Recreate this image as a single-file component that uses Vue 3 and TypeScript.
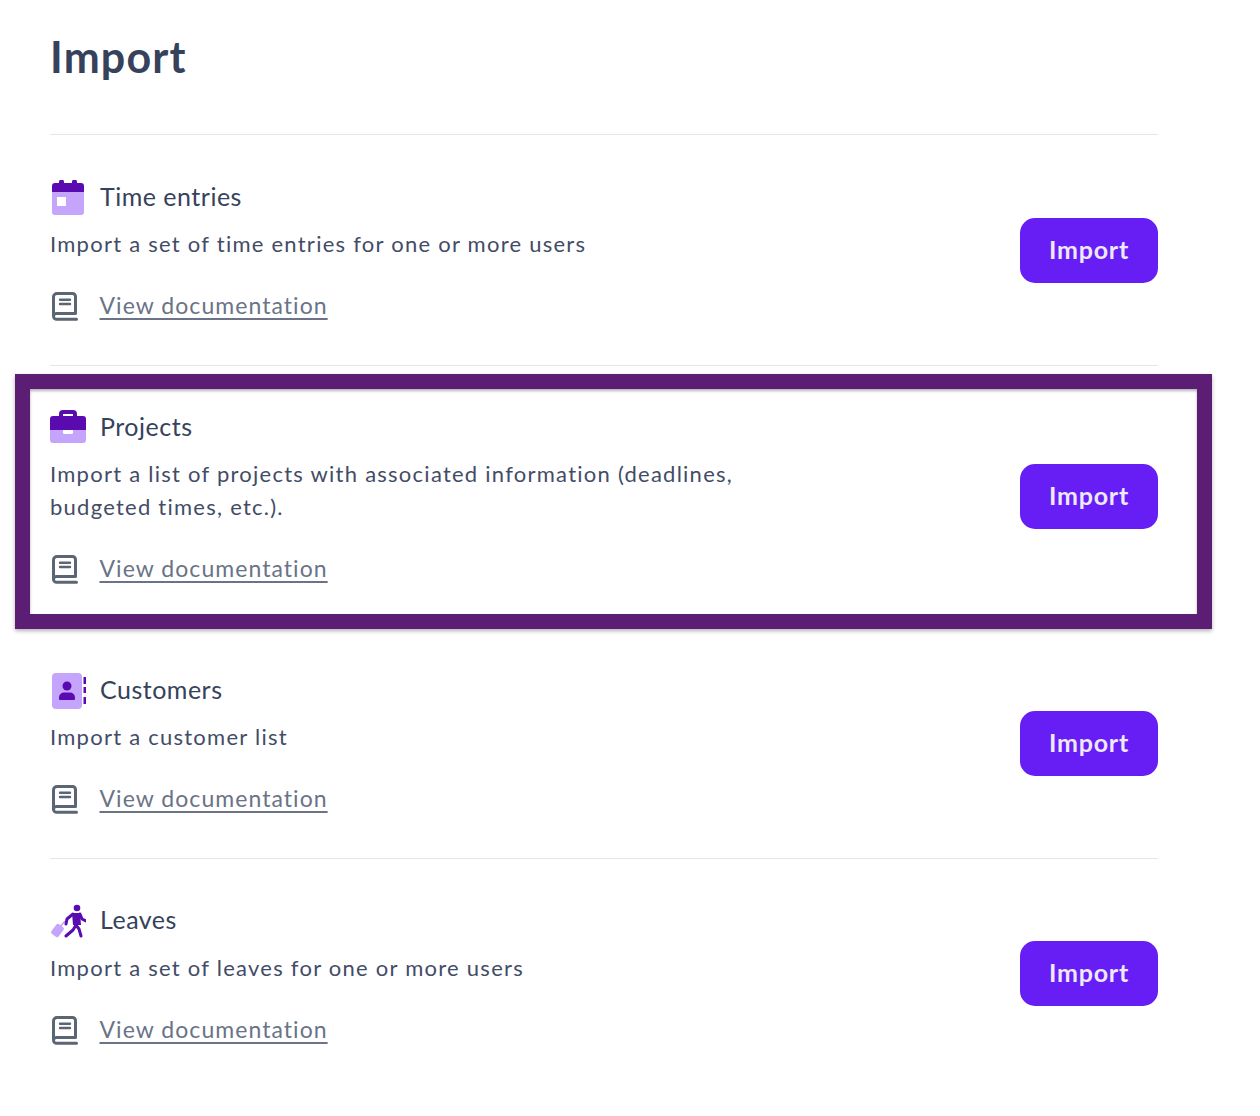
<script setup lang="ts">
interface ImportRow {
  id: string
  title: string
  desc: string
  highlighted?: boolean
}

const rows: ImportRow[] = [
  { id: 'time', title: 'Time entries', desc: 'Import a set of time entries for one or more users' },
  {
    id: 'projects',
    title: 'Projects',
    desc: 'Import a list of projects with associated information (deadlines, budgeted times, etc.).',
    highlighted: true,
  },
  { id: 'customers', title: 'Customers', desc: 'Import a customer list' },
  { id: 'leaves', title: 'Leaves', desc: 'Import a set of leaves for one or more users' },
]
</script>

<template>
  <div class="page">
    <h1 class="page-title">Import</h1>

    <section v-for="row in rows" :key="row.id" class="row">
      <div v-if="row.highlighted" class="highlight" />

      <div class="info">
        <div class="head">
          <svg class="kind-icon" viewBox="0 0 36 36" width="36" height="36">
            <template v-if="row.id === 'time'">
              <path fill="#c4a5fb" d="M2 12h32v20a3 3 0 0 1-3 3H5a3 3 0 0 1-3-3z" />
              <path fill="#5a0bb0" d="M2 12V6a3 3 0 0 1 3-3h4V2a2.500 2.500 0 0 1 5 0v1h8V2a2.500 2.500 0 0 1 5 0v1h4a3 3 0 0 1 3 3v6z" />
              <rect x="7" y="17" width="9" height="9" fill="#fff" />
            </template>
            <template v-else-if="row.id === 'projects'">
              <path fill="none" stroke="#5a0bb0" stroke-width="4" d="M11 7V4a2 2 0 0 1 2-2h10a2 2 0 0 1 2 2v3" />
              <path fill="#5a0bb0" d="M0 20V9a3 3 0 0 1 3-3h30a3 3 0 0 1 3 3v11z" />
              <path fill="#c4a5fb" d="M0 20h36v10a3 3 0 0 1-3 3H3a3 3 0 0 1-3-3z" />
              <path fill="#fff" d="M13 20h10v2.500a1.500 1.500 0 0 1-1.500 1.500h-7a1.500 1.500 0 0 1-1.500-1.500z" />
            </template>
            <template v-else-if="row.id === 'customers'">
              <rect x="2" y="0" width="30" height="36" rx="4" fill="#c4a5fb" />
              <circle cx="17" cy="13" r="4.500" fill="#5a0bb0" />
              <path fill="#5a0bb0" d="M9 26v-1.500a5 5 0 0 1 5-5h6a5 5 0 0 1 5 5V26a1 1 0 0 1-1 1H10a1 1 0 0 1-1-1z" />
              <rect x="33.500" y="4" width="2.500" height="7" fill="#5a0bb0" />
              <rect x="33.500" y="14" width="2.500" height="6" fill="#5a0bb0" />
              <rect x="33.500" y="24" width="2.500" height="7" fill="#5a0bb0" />
            </template>
            <template v-else>
              <rect x="3" y="21.500" width="9" height="12" rx="2" fill="#c4a5fb" transform="rotate(38 7.500 27.500)" />
              <path fill="none" stroke="#c4a5fb" stroke-width="1.600" d="M10 24l5-6" />
              <circle cx="27" cy="5" r="3.300" fill="#5a0bb0" />
              <path fill="#5a0bb0" d="M22 10h8l1 12h-8z" />
              <path fill="none" stroke="#5a0bb0" stroke-width="3" stroke-linecap="round" stroke-linejoin="round" d="M23 11l-6 5-1 5M30 11l2 5 4 2M26 22l-3 5-7 6M26 22l3 4 2 7" />
            </template>
          </svg>
          <h2 class="row-title">{{ row.title }}</h2>
        </div>
        <p class="desc">{{ row.desc }}</p>
        <div class="doc">
          <svg class="book" viewBox="0 0 30 32" width="30" height="32" fill="none" stroke="#5a6673" stroke-width="3" stroke-linecap="round" stroke-linejoin="round">
            <path d="M3.500 27V8a3.500 3.500 0 0 1 3.500-3.500h15.500a3 3 0 0 1 3 3V24.500H7a3 3 0 0 0-3.500 2.800A3 3 0 0 0 7 30.200h19.500" />
            <path stroke-width="2.400" d="M10 10.700h10M10 15h10" />
          </svg>
          <a class="doc-link" href="#">View documentation</a>
        </div>
      </div>

      <button class="import-btn" type="button">Import</button>
    </section>
  </div>
</template>

<style>
html,
body {
  background: #fff;
}
</style>

<style scoped>
.page {
  width: 1108px;
  padding: 28.4px 0 0 50px;
  font-family: Lato, "Open Sans", sans-serif;
}

.page-title {
  margin: 0 0 49px;
  font-size: 43px;
  line-height: 57px;
  font-weight: 700;
  letter-spacing: 1.2px;
  color: #36425c;
}

.row {
  position: relative;
  display: flex;
  align-items: center;
  justify-content: space-between;
  border-top: 1px solid #e6e7e9;
  padding: 44.5px 0 43px;
}

.row:last-child {
  padding-bottom: 60px;
}

.highlight {
  position: absolute;
  top: 8px;
  left: -35px;
  right: -54px;
  bottom: -1px;
  z-index: 1;
  border: 15px solid #5b1e74;
  box-shadow: 0 2px 4px rgba(0, 0, 0, 0.3), inset 0 2px 3px rgba(0, 0, 0, 0.3);
  pointer-events: none;
}

.info {
  width: 700px;
}

.head {
  display: flex;
  align-items: center;
  gap: 14px;
  height: 36px;
}

.kind-icon {
  flex-shrink: 0;
}

.row-title {
  margin: 0;
  padding-bottom: 4px;
  font-size: 25px;
  font-weight: 400;
  letter-spacing: 0.5px;
  color: #36425c;
}

.desc {
  margin: 12px 0 0;
  font-size: 22px;
  line-height: 32.75px;
  letter-spacing: 1.25px;
  color: #434c66;
}

.row:last-child .desc {
  margin-top: 12.5px;
}

.doc {
  display: flex;
  align-items: center;
  gap: 20px;
  height: 32px;
  margin: 28.5px 0 0.5px;
}

.row:last-child .doc {
  margin-top: 28px;
}

.book {
  flex-shrink: 0;
}

.doc-link {
  margin-left: -0.5px;
  font-size: 23px;
  letter-spacing: 1.05px;
  color: #6a7387;
  text-decoration: underline;
  text-underline-offset: 4px;
}

.import-btn {
  flex-shrink: 0;
  width: 138px;
  height: 65px;
  margin-top: -1.4px;
  padding: 0 0 3px;
  border: none;
  border-radius: 15px;
  background: #671ef5;
  color: #eee8fb;
  font-family: inherit;
  font-size: 25px;
  font-weight: 700;
  letter-spacing: 0.8px;
  cursor: pointer;
}

.row:last-child .import-btn {
  margin-top: -1.6px;
}
</style>
